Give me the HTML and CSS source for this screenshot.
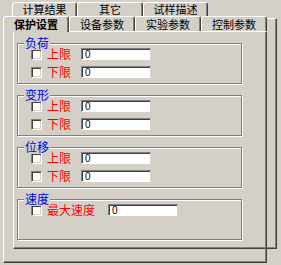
FILE: index.html
```html
<!DOCTYPE html>
<html lang="zh">
  <head>
    <meta charset="UTF-8" />
    <meta name="viewport" content="width=device-width, initial-scale=1.0" />
    <title>保护设置</title>
    <link rel="stylesheet" href="styles.css">
  </head>
  <body>
    <div class="tabctl">
      <div class="tab-row back">
        <div class="tab">计算结果</div>
        <div class="tab">其它</div>
        <div class="tab">试样描述</div>
      </div>

      <div class="deck">
        <div class="back-page"></div>

        <div class="tab-row front">
          <div class="tab active">保护设置</div>
          <div class="tab">设备参数</div>
          <div class="tab">实验参数</div>
          <div class="tab">控制参数</div>
        </div>

        <div class="page">
          <div class="group">
            <span class="legend">负荷</span>
            <label class="field">
              <input type="checkbox" class="check" />
              <span class="label">上限</span>
              <input type="text" class="value" value="0" />
            </label>
            <label class="field">
              <input type="checkbox" class="check" />
              <span class="label">下限</span>
              <input type="text" class="value" value="0" />
            </label>
          </div>

          <div class="group">
            <span class="legend">变形</span>
            <label class="field">
              <input type="checkbox" class="check" />
              <span class="label">上限</span>
              <input type="text" class="value" value="0" />
            </label>
            <label class="field">
              <input type="checkbox" class="check" />
              <span class="label">下限</span>
              <input type="text" class="value" value="0" />
            </label>
          </div>

          <div class="group">
            <span class="legend">位移</span>
            <label class="field">
              <input type="checkbox" class="check" />
              <span class="label">上限</span>
              <input type="text" class="value" value="0" />
            </label>
            <label class="field">
              <input type="checkbox" class="check" />
              <span class="label">下限</span>
              <input type="text" class="value" value="0" />
            </label>
          </div>

          <div class="group">
            <span class="legend">速度</span>
            <label class="field">
              <input type="checkbox" class="check" />
              <span class="label wide">最大速度</span>
              <input type="text" class="value" value="0" />
            </label>
          </div>
        </div>
      </div>
    </div>
  </body>
</html>
```

FILE: styles.css
```css
* {
  box-sizing: border-box;
}

body {
  width: 281px;
  height: 265px;
  margin: 0;
  overflow: hidden;
  background-color: #d4d0c8; /* classic dialog grey */
  font-family: "Noto Sans CJK SC", sans-serif;
  font-size: 12px;
}

.tabctl {
  padding-top: 2px;
}

.tab-row {
  display: flex;
}

.tab-row.back {
  padding-left: 12px;
  height: 14px;
}

.tab-row.front {
  position: relative;
  z-index: 2;
  padding-left: 3px;
  height: 15px;
}

.tab {
  display: flex;
  align-items: center;
  justify-content: center;
  width: 66px;
  height: 100%;
  border: 1px solid;
  border-bottom: 0;
  border-color: #fff #404040 transparent #fff;
  border-radius: 3px 3px 0 0;
  box-shadow: inset -1px 0 #808080;
  background-color: #d4d0c8;
  color: #000;
  font-size: 11px;
  line-height: 1;
}

.tab-row.back .tab:nth-child(2) {
  width: 66px;
}

.tab-row.back .tab:nth-child(odd) {
  width: 65px;
}

.tab.active {
  height: 16px;
  font-weight: bold;
}

.deck {
  position: relative;
}

/* page of the back tab row, only its right edge shows */
.back-page {
  position: absolute;
  left: 13px;
  top: 2px;
  width: 264px;
  height: 231px;
  border: 1px solid;
  border-color: #fff #404040 #404040 #fff;
  box-shadow: inset -1px -1px #808080;
}

.page {
  position: relative;
  z-index: 1;
  width: 264px;
  height: 232px;
  margin-left: 3px;
  padding: 11px 0 0 13px;
  border: 1px solid;
  border-color: #fff #404040 #404040 #fff;
  box-shadow: inset -1px -1px #808080;
}

.group {
  position: relative;
  width: 225px;
  height: 41px;
  margin-bottom: 11px;
  padding: 4px 0 0 13px;
  border: 1px solid #808080;
  box-shadow: 1px 1px 0 #fff, inset 1px 1px 0 #fff;
}

.legend {
  position: absolute;
  left: 6px;
  top: -8px;
  padding: 0 1px;
  background-color: #d4d0c8;
  color: #0000e0;
  font-size: 12px;
  line-height: 14px;
}

.field {
  display: flex;
  align-items: center;
  height: 12px;
  margin-bottom: 6px;
}

.check {
  appearance: none;
  width: 11px;
  height: 11px;
  margin: 0 5px 0 0;
  border: 1px solid;
  border-color: #808080 #fff #fff #808080;
  box-shadow: inset 1px 1px #404040, inset -1px -1px #d4d0c8;
  background-color: #fff;
}

.label {
  width: 34px;
  color: #f00;
  font-size: 12px;
  line-height: 12px;
}

.label.wide {
  width: 61px;
}

.value {
  appearance: none;
  width: 70px;
  height: 12px;
  margin: 0;
  padding: 0 0 0 3px;
  border: 1px solid;
  border-color: #808080 #d4d0c8 #fff #808080;
  box-shadow: inset 1px 1px #404040;
  background-color: #fff;
  color: #000;
  font-family: "Liberation Sans", sans-serif;
  font-size: 10px;
  line-height: 10px;
  outline: none;
}
```
